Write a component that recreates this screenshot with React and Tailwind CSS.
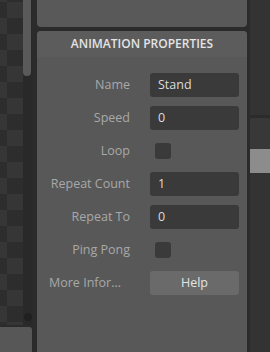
import React from "react";

const rows = [
  { label: "Name", type: "input", value: "Stand" },
  { label: "Speed", type: "input", value: "0" },
  { label: "Loop", type: "check" },
  { label: "Repeat Count", type: "input", value: "1" },
  { label: "Repeat To", type: "input", value: "0" },
  { label: "Ping Pong", type: "check" },
  { label: "More Infor...", type: "button", value: "Help" },
];

const Field = ({ row }) => {
  if (row.type === "check") {
    return (
      <div className="flex h-6 items-center pl-[5px]">
        <div className="h-4 w-4 rounded-[3px] bg-[#3a3a3a]"></div>
      </div>
    );
  }
  if (row.type === "button") {
    return (
      <button className="h-6 w-full rounded-[3px] bg-[#6a6a6a] text-center text-[12.5px] font-medium leading-6 text-[#e4e4e4]">
        {row.value}
      </button>
    );
  }
  return (
    <div className="h-6 w-full rounded-[3px] bg-[#3a3a3a] pl-2 text-[12.5px] leading-6 text-[#dcdcdc]">
      {row.value}
    </div>
  );
};

const App = () => {
  return (
    <div
      className="flex h-[352px] w-[270px] overflow-hidden bg-[#2b2b2b]"
      style={{ fontFamily: '"Open Sans", "Noto Sans", sans-serif' }}
    >
      {/* left strip: checker canvas + scrollbar */}
      <div className="flex w-[32px] flex-col gap-[2px]">
        <div className="flex flex-1">
          <div className="w-[23px] bg-[conic-gradient(#363636_25%,#2d2d2d_0_50%,#363636_0_75%,#2d2d2d_0)] bg-[length:32px_32px] bg-[position:-9px_2px]"></div>
          <div className="relative flex w-[9px] flex-col bg-[#292929]">
            <div className="h-[76px] w-[8px] rounded-b-[4px] bg-[#5a5a5a]"></div>
            <div className="absolute bottom-[4px] left-[1px] h-[8px] w-[8px] rounded-full bg-[#202020]"></div>
          </div>
        </div>
        <div className="h-[25px] rounded-tr-[3px] bg-[#575757]"></div>
      </div>

      {/* center panels */}
      <div className="ml-[5px] flex w-[210px] flex-col gap-[4px]">
        <div className="h-[27px] rounded-b-[4px] bg-[#595959]"></div>
        <div className="flex flex-1 flex-col overflow-hidden rounded-t-[4px] bg-[#585858]">
          <div className="flex h-[26px] items-center justify-center bg-[#5c5c5c] text-[12px] font-semibold text-[#e4e4e4]">
            ANIMATION PROPERTIES
          </div>
          <div className="flex flex-col gap-[9px] pl-[12px] pr-[8px] pt-[16px]">
            {rows.map((row) => (
              <div key={row.label} className="grid grid-cols-[81px_89px] gap-x-[20px]">
                <div
                  className={
                    row.type === "button"
                      ? "whitespace-nowrap text-left text-[12.5px] leading-6 text-[#a8a8a8]"
                      : "whitespace-nowrap text-right text-[12.5px] leading-6 text-[#a8a8a8]"
                  }
                >
                  {row.label}
                </div>
                <Field row={row} />
              </div>
            ))}
          </div>
        </div>
      </div>

      {/* right strip */}
      <div className="ml-[3px] flex flex-1 flex-col bg-[#333333]">
        <div className="h-[115px]"></div>
        <div className="h-[3px] bg-[#2b2b2b]"></div>
        <div className="h-[31px] bg-[#383838]"></div>
        <div className="h-[24px] bg-[#8c8c8c]"></div>
        <div className="flex-1"></div>
      </div>
    </div>
  );
};

export default App;
